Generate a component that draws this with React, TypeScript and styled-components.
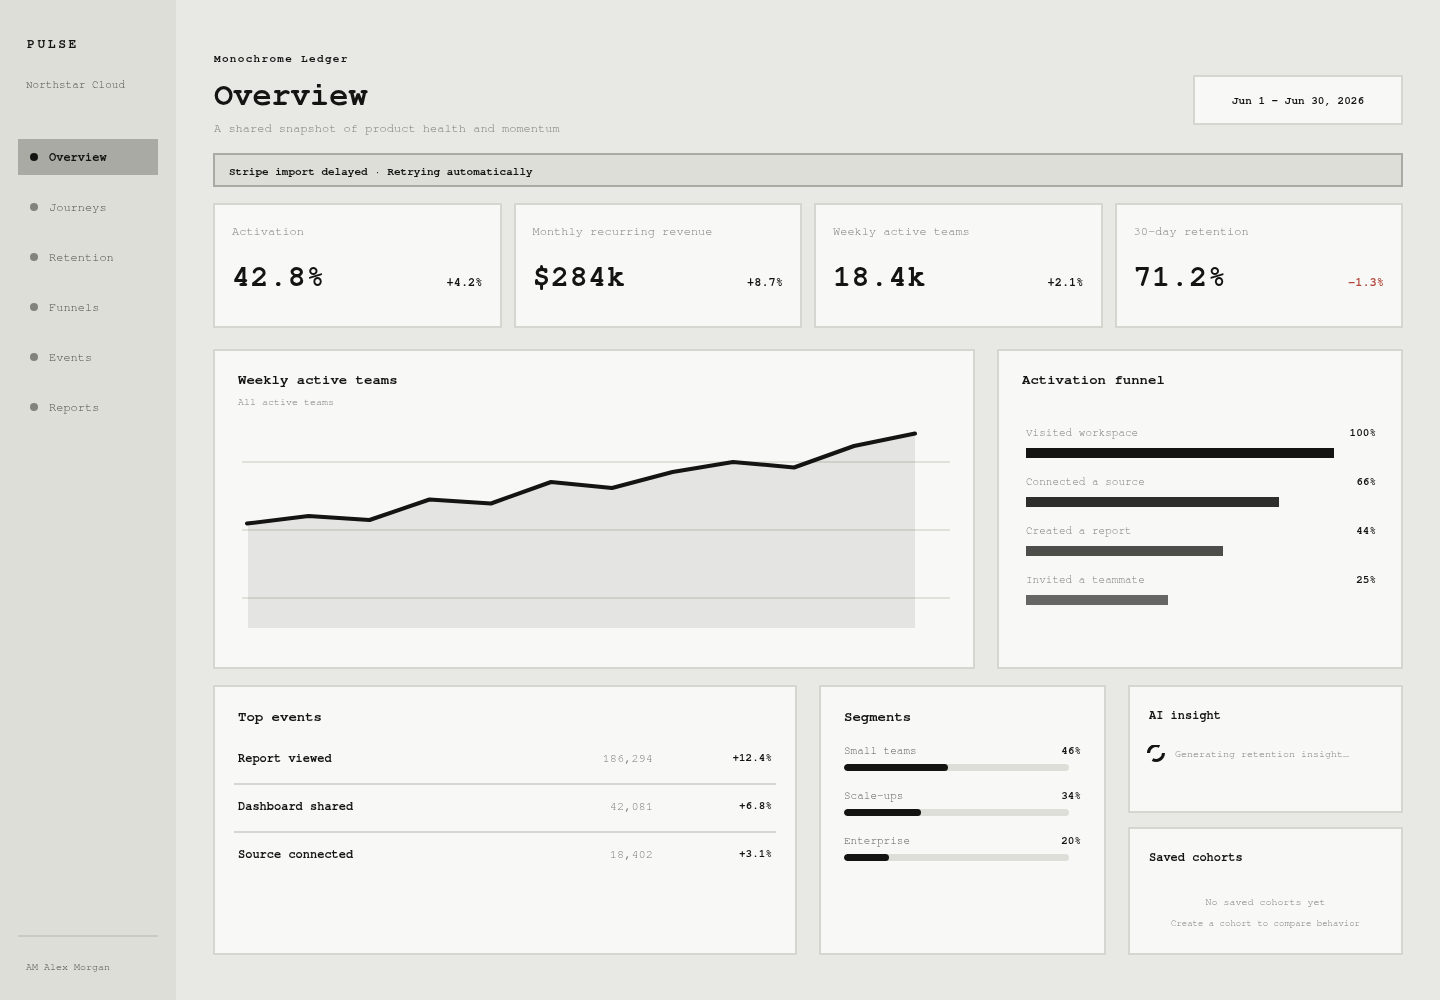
import styled, { createGlobalStyle } from 'styled-components';

const GlobalStyle = createGlobalStyle`
    * {
        box-sizing: border-box;
    }
    html,
    body {
        margin: 0;
        padding: 0;
        background: #e8e9e4;
    }
    body {
        font-family: FreeMono, 'Liberation Mono', monospace;
        color: #141412;
    }
`;

const navItems = ['Overview', 'Journeys', 'Retention', 'Funnels', 'Events', 'Reports'];

const kpis = [
    { label: 'Activation', value: '42.8%', delta: '+4.2%' },
    { label: 'Monthly recurring revenue', value: '$284k', delta: '+8.7%' },
    { label: 'Weekly active teams', value: '18.4k', delta: '+2.1%' },
    { label: '30-day retention', value: '71.2%', delta: '−1.3%', down: true },
];

const funnel = [
    { label: 'Visited workspace', value: '100%', width: 308, color: '#141412' },
    { label: 'Connected a source', value: '66%', width: 253, color: '#2e2e2c' },
    { label: 'Created a report', value: '44%', width: 197, color: '#4d4d4a' },
    { label: 'Invited a teammate', value: '25%', width: 142, color: '#666664' },
];

const events = [
    { name: 'Report viewed', count: '186,294', delta: '+12.4%' },
    { name: 'Dashboard shared', count: '42,081', delta: '+6.8%' },
    { name: 'Source connected', count: '18,402', delta: '+3.1%' },
];

const segments = [
    { label: 'Small teams', value: 46 },
    { label: 'Scale-ups', value: 34 },
    { label: 'Enterprise', value: 20 },
];

const trend =
    '308.5,516 369.5,520 429.5,499.5 491,503.5 551,482 612,488 672.5,472 733,462 794,467.5 854,446 915,433.5';

export default function App() {
    return (
        <>
            <GlobalStyle />
            <Page>
                <Sidebar>
                    <Brand>PULSE</Brand>
                    <Workspace>Northstar Cloud</Workspace>
                    <Nav>
                        {navItems.map((item, i) => (
                            <NavItem key={item} $active={i === 0}>
                                <NavDot $active={i === 0} />
                                {item}
                            </NavItem>
                        ))}
                    </Nav>
                    <SidebarFooter>AM Alex Morgan</SidebarFooter>
                </Sidebar>

                <Main>
                    <Header>
                        <div>
                            <Eyebrow>Monochrome Ledger</Eyebrow>
                            <PageTitle>Overview</PageTitle>
                            <Subtitle>A shared snapshot of product health and momentum</Subtitle>
                        </div>
                        <DateBox>Jun 1 – Jun 30, 2026</DateBox>
                    </Header>

                    <Alert>Stripe import delayed · Retrying automatically</Alert>

                    <KpiGrid>
                        {kpis.map((kpi) => (
                            <KpiCard key={kpi.label}>
                                <KpiLabel>{kpi.label}</KpiLabel>
                                <KpiRow>
                                    <KpiValue>{kpi.value}</KpiValue>
                                    <KpiDelta $down={kpi.down}>{kpi.delta}</KpiDelta>
                                </KpiRow>
                            </KpiCard>
                        ))}
                    </KpiGrid>

                    <ChartRow>
                        <Card>
                            <CardTitle>Weekly active teams</CardTitle>
                            <CardNote>All active teams</CardNote>
                            <ChartSvg viewBox="238 420 726 220" aria-hidden="true">
                                <line x1="242" x2="950" y1="462" y2="462" stroke="#e0e1da" strokeWidth="2" />
                                <line x1="242" x2="950" y1="530" y2="530" stroke="#e0e1da" strokeWidth="2" />
                                <line x1="242" x2="950" y1="598" y2="598" stroke="#e0e1da" strokeWidth="2" />
                                <polygon points={`248,523.5 ${trend} 915,628 248,628`} fill="#141412" fillOpacity="0.085" />
                                <polyline points={`247,523.5 ${trend}`} fill="none" stroke="#141412" strokeWidth="4" strokeLinecap="round" strokeLinejoin="round" />
                            </ChartSvg>
                        </Card>
                        <Card>
                            <CardTitle>Activation funnel</CardTitle>
                            <FunnelList>
                                {funnel.map((row) => (
                                    <FunnelRow key={row.label}>
                                        <RowHead>
                                            <RowLabel>{row.label}</RowLabel>
                                            <RowValue>{row.value}</RowValue>
                                        </RowHead>
                                        <FunnelBar $width={row.width} $color={row.color} />
                                    </FunnelRow>
                                ))}
                            </FunnelList>
                        </Card>
                    </ChartRow>

                    <BottomRow>
                        <BottomCard>
                            <CardTitle>Top events</CardTitle>
                            <EventList>
                                {events.map((ev) => (
                                    <EventRow key={ev.name}>
                                        <EventName>{ev.name}</EventName>
                                        <EventCount>{ev.count}</EventCount>
                                        <EventDelta>{ev.delta}</EventDelta>
                                    </EventRow>
                                ))}
                            </EventList>
                        </BottomCard>
                        <BottomCard>
                            <CardTitle>Segments</CardTitle>
                            <SegmentList>
                                {segments.map((seg) => (
                                    <div key={seg.label}>
                                        <RowHead>
                                            <RowLabel $dark>{seg.label}</RowLabel>
                                            <RowValue>{seg.value}%</RowValue>
                                        </RowHead>
                                        <Track>
                                            <Fill $value={seg.value} />
                                        </Track>
                                    </div>
                                ))}
                            </SegmentList>
                        </BottomCard>
                        <SideStack>
                            <SmallCard>
                                <SmallTitle>AI insight</SmallTitle>
                                <InsightRow>
                                    <svg width="18" height="18" viewBox="0 1 18 18" aria-hidden="true">
                                        <path d="M1.5 9 A7.5 7.5 0 0 1 12.5 2.4" fill="none" stroke="#141412" strokeWidth="3" />
                                        <path d="M16.5 9 A7.5 7.5 0 0 1 5.5 15.6" fill="none" stroke="#141412" strokeWidth="3" />
                                    </svg>
                                    <InsightText>Generating retention insight…</InsightText>
                                </InsightRow>
                            </SmallCard>
                            <SmallCard>
                                <SmallTitle>Saved cohorts</SmallTitle>
                                <EmptyTitle>No saved cohorts yet</EmptyTitle>
                                <EmptyNote>Create a cohort to compare behavior</EmptyNote>
                            </SmallCard>
                        </SideStack>
                    </BottomRow>
                </Main>
            </Page>
        </>
    );
}

const Page = styled.div`
    display: flex;
    width: 1440px;
    height: 1000px;
    overflow: hidden;
    will-change: transform;
`;

const Sidebar = styled.aside`
    display: flex;
    flex-direction: column;
    width: 176px;
    flex-shrink: 0;
    padding: 38px 18px 0;
    background: #ddded8;
`;

const Brand = styled.div`
    height: 14px;
    padding-left: 9px;
    font-weight: 700;
    font-size: 13px;
    line-height: 14px;
    letter-spacing: 0.2em;
`;

const Workspace = styled.div`
    margin-top: 26px;
    padding-left: 8px;
    font-size: 11px;
    line-height: 14px;
    color: #4f504b;
`;

const Nav = styled.nav`
    display: flex;
    flex-direction: column;
    gap: 14px;
    margin-top: 47px;
`;

const NavItem = styled.div<{ $active?: boolean }>`
    display: flex;
    align-items: center;
    gap: 11px;
    height: 36px;
    padding-left: 12px;
    font-size: 12px;
    font-weight: ${(p) => (p.$active ? 700 : 400)};
    color: ${(p) => (p.$active ? '#141412' : '#4f504b')};
    background: ${(p) => (p.$active ? '#a9aaa3' : 'transparent')};
`;

const NavDot = styled.span<{ $active?: boolean }>`
    width: 8px;
    height: 8px;
    border-radius: 50%;
    background: ${(p) => (p.$active ? '#141412' : '#82837d')};
`;

const SidebarFooter = styled.div`
    margin-top: auto;
    height: 65px;
    padding: 23px 8px 0;
    border-top: 2px solid #c9cac3;
    font-size: 10px;
    line-height: 14px;
    color: #4f504b;
`;

const Main = styled.main`
    flex: 1;
    min-width: 0;
    padding: 52px 37px 0;
`;

const Header = styled.header`
    display: flex;
    justify-content: space-between;
    align-items: flex-end;
    height: 84px;
`;

const Eyebrow = styled.div`
    padding-left: 1px;
    font-weight: 700;
    font-size: 11px;
    line-height: 14px;
    letter-spacing: 0.12em;
`;

const PageTitle = styled.h1`
    margin: 11px 0 0 1px;
    font-weight: 700;
    font-size: 32px;
    line-height: 36px;
`;

const Subtitle = styled.p`
    margin: 7px 0 0 1px;
    font-size: 12px;
    line-height: 16px;
    color: #7d7e78;
`;

const DateBox = styled.div`
    display: flex;
    align-items: center;
    justify-content: center;
    width: 210px;
    height: 50px;
    margin-bottom: 11px;
    padding-top: 1px;
    border: 2px solid #d5d6cf;
    background: #f8f9f6;
    font-weight: 700;
    font-size: 11px;
`;

const Alert = styled.div`
    display: flex;
    align-items: center;
    height: 34px;
    margin-top: 17px;
    padding: 2px 0 0 14px;
    border: 2px solid #a9aaa3;
    background: #ddded8;
    font-weight: 700;
    font-size: 11px;
`;

const KpiGrid = styled.section`
    display: grid;
    grid-template-columns: repeat(4, 1fr);
    gap: 12px;
    margin-top: 16px;
`;

const KpiCard = styled.div`
    height: 125px;
    padding: 18px 17px 0;
    border: 2px solid #d5d6cf;
    background: #f8f9f6;
`;

const KpiLabel = styled.div`
    font-size: 12px;
    line-height: 16px;
    color: #7d7e78;
`;

const KpiRow = styled.div`
    display: flex;
    justify-content: space-between;
    align-items: flex-end;
    margin-top: 21px;
`;

const KpiValue = styled.div`
    font-weight: 700;
    font-size: 30px;
    line-height: 34px;
    letter-spacing: 0.6px;
`;

const KpiDelta = styled.div<{ $down?: boolean }>`
    margin-bottom: 5px;
    font-weight: 700;
    font-size: 12px;
    line-height: 14px;
    color: ${(p) => (p.$down ? '#b3483c' : '#141412')};
`;

const ChartRow = styled.section`
    display: grid;
    grid-template-columns: 762px 406px;
    gap: 22px;
    height: 320px;
    margin-top: 21px;
`;

const Card = styled.div`
    min-width: 0;
    padding: 21px 22px 0 23px;
    border: 2px solid #d5d6cf;
    background: #f8f9f6;
`;

const BottomCard = styled(Card)`
    padding-top: 22px;
`;

const CardTitle = styled.h2`
    margin: 0;
    font-weight: 700;
    font-size: 14px;
    line-height: 16px;
`;

const CardNote = styled.div`
    margin-top: 7px;
    font-size: 10px;
    line-height: 14px;
    color: #7d7e78;
`;

const ChartSvg = styled.svg`
    display: block;
    width: 726px;
    height: 220px;
    margin-top: 11px;
`;

const FunnelList = styled.div`
    display: flex;
    flex-direction: column;
    gap: 16px;
    margin: 37px 3px 0 4px;
`;

const FunnelRow = styled.div`
    display: flex;
    flex-direction: column;
    gap: 9px;
`;

const RowHead = styled.div`
    display: flex;
    justify-content: space-between;
    align-items: center;
    height: 14px;
`;

const RowLabel = styled.span<{ $dark?: boolean }>`
    font-size: 11px;
    color: ${(p) => (p.$dark ? '#5f605a' : '#7d7e78')};
`;

const RowValue = styled.span`
    font-weight: 700;
    font-size: 11px;
`;

const FunnelBar = styled.div<{ $width: number; $color: string }>`
    width: ${(p) => p.$width}px;
    height: 10px;
    background: ${(p) => p.$color};
`;

const BottomRow = styled.section`
    display: grid;
    grid-template-columns: 584px 287px 275px;
    gap: 22px;
    height: 270px;
    margin-top: 16px;
`;

const EventList = styled.div`
    margin: 12px -3px 0 -4px;
`;

const EventRow = styled.div`
    display: grid;
    grid-template-columns: 1fr 80px 119px;
    align-items: center;
    height: 48px;
    padding: 0 4px 5px;
    border-bottom: 2px solid #d5d6cf;

    &:last-child {
        border-bottom-color: transparent;
    }
`;

const EventName = styled.span`
    font-weight: 700;
    font-size: 12px;
`;

const EventCount = styled.span`
    font-size: 12px;
    text-align: right;
    color: #7d7e78;
`;

const EventDelta = styled.span`
    font-weight: 700;
    font-size: 11px;
    text-align: right;
`;

const SegmentList = styled.div`
    display: flex;
    flex-direction: column;
    gap: 17px;
    margin: 18px 1px 0 0;
`;

const Track = styled.div`
    width: 225.4px;
    height: 7px;
    margin-top: 7px;
    border-radius: 4px;
    background: #ddded8;
    overflow: hidden;
`;

const Fill = styled.div<{ $value: number }>`
    width: ${(p) => p.$value}%;
    height: 100%;
    border-radius: 4px;
    background: #141412;
`;

const SideStack = styled.div`
    display: grid;
    grid-template-rows: 128px 128px;
    gap: 14px;
`;

const SmallCard = styled.div`
    padding: 21px 18px 0 19px;
    border: 2px solid #d5d6cf;
    background: #f8f9f6;
`;

const SmallTitle = styled.h3`
    margin: 0;
    font-weight: 700;
    font-size: 12px;
    line-height: 14px;
`;

const InsightRow = styled.div`
    display: flex;
    align-items: center;
    gap: 10px;
    margin: 23px 0 0 -2px;
`;

const InsightText = styled.span`
    font-size: 10px;
    color: #7d7e78;
`;

const EmptyTitle = styled.div`
    margin: 31px 0 0 -1px;
    font-size: 10px;
    line-height: 14px;
    text-align: center;
    color: #7d7e78;
`;

const EmptyNote = styled.div`
    margin: 7.5px 0 0 -1px;
    font-size: 9px;
    line-height: 14px;
    text-align: center;
    color: #7d7e78;
`;
